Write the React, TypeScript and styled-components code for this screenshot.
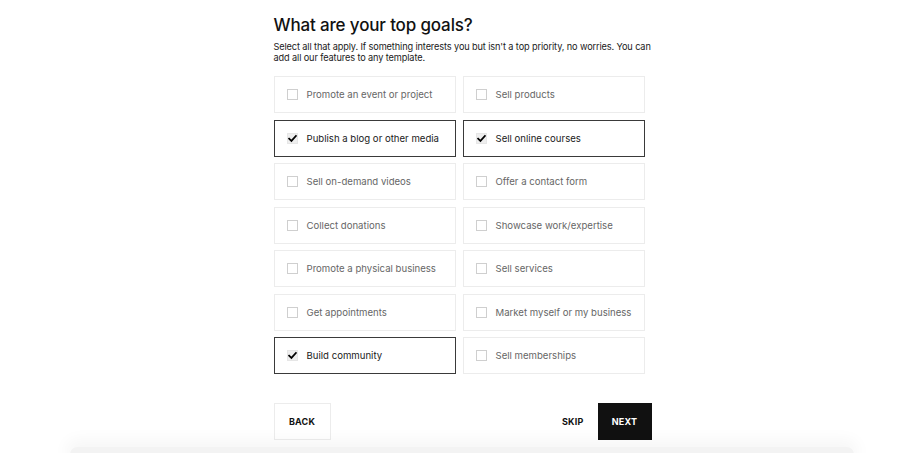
import React, { useState } from "react";
import styled, { createGlobalStyle } from "styled-components";

const Global = createGlobalStyle`
  html, body { margin: 0; padding: 0; background: #fff; }
  body { font-family: Inter, "Open Sans", Arial, sans-serif; color: #111; -webkit-font-smoothing: antialiased; }
`;

const Page = styled.div`
  width: 378px;
  margin: 0 auto;
  padding-top: 14px;
  padding-left: 1px;
`;

const Title = styled.h1`
  margin: 0;
  font-size: 17px;
  font-weight: 500;
  line-height: 22px;
  letter-spacing: -0.15px;
  color: #111;
`;

const Subtitle = styled.p`
  margin: 6px -8px 0 0;
  font-size: 9.2px;
  line-height: 10.5px;
  letter-spacing: -0.12px;
  color: #1a1a1a;
`;

const Grid = styled.div`
  margin-top: 13px;
  width: 371px;
  display: grid;
  grid-template-columns: 182px 182px;
  column-gap: 7px;
  row-gap: 6.5px;
`;

const Card = styled.label<{ $on: boolean }>`
  box-sizing: border-box;
  height: 37px;
  display: flex;
  align-items: center;
  gap: 9px;
  padding-left: 12px;
  border: 1px solid ${(p) => (p.$on ? "#3a3a3a" : "#ececec")};
  background: #fff;
  cursor: pointer;
  font-size: 9.6px;
  color: ${(p) => (p.$on ? "#1a1a1a" : "#666")};
`;

const Box = styled.span<{ $on: boolean }>`
  box-sizing: border-box;
  width: 11px;
  height: 11px;
  flex: none;
  border: 1px solid ${(p) => (p.$on ? "#e6e6e6" : "#cfcfcf")};
  background: ${(p) => (p.$on ? "#eeeeee" : "#fff")};
  display: flex;
  align-items: center;
  justify-content: center;
`;

const Footer = styled.div`
  margin-top: 28.5px;
  display: flex;
  align-items: center;
`;

const BackButton = styled.button`
  box-sizing: border-box;
  width: 57px;
  height: 37px;
  border: 1px solid #ececec;
  background: #fff;
  font-family: inherit;
  font-size: 9px;
  font-weight: 700;
  letter-spacing: 0.2px;
  color: #111;
  cursor: pointer;
`;

const Spacer = styled.div`
  flex: 1;
`;

const SkipButton = styled.button`
  border: 0;
  background: none;
  font-family: inherit;
  font-size: 9px;
  font-weight: 700;
  letter-spacing: 0.2px;
  color: #111;
  padding: 0;
  margin-right: 14px;
  cursor: pointer;
`;

const NextButton = styled.button`
  box-sizing: border-box;
  width: 54px;
  height: 37px;
  border: 0;
  background: #111;
  color: #fff;
  font-family: inherit;
  font-size: 9px;
  font-weight: 700;
  letter-spacing: 0.2px;
  cursor: pointer;
`;

const BottomShade = styled.div`
  position: fixed;
  left: 70px;
  right: 70px;
  bottom: -8px;
  height: 14px;
  background: #f3f3f3;
  border-radius: 10px;
  box-shadow: 0 -3px 16px 4px rgba(0, 0, 0, 0.04);
`;

const items: [string, string][] = [
  ["Promote an event or project", "Sell products"],
  ["Publish a blog or other media", "Sell online courses"],
  ["Sell on-demand videos", "Offer a contact form"],
  ["Collect donations", "Showcase work/expertise"],
  ["Promote a physical business", "Sell services"],
  ["Get appointments", "Market myself or my business"],
  ["Build community", "Sell memberships"],
];

const Check = () => (
  <svg width="10" height="9" viewBox="0 0 10 9">
    <path d="M1.2 4.6 L3.8 7.2 L8.8 1.6" fill="none" stroke="#000" strokeWidth="1.9" strokeLinecap="square" />
  </svg>
);

export default function App() {
  const [sel, setSel] = useState<Record<string, boolean>>({
    "Publish a blog or other media": true,
    "Sell online courses": true,
    "Build community": true,
  });
  const flat = items.flat();
  return (
    <>
      <Global />
      <Page>
        <Title>What are your top goals?</Title>
        <Subtitle>
          Select all that apply. If something interests you but isn't a top priority, no worries. You can
          add all our features to any template.
        </Subtitle>
        <Grid>
          {flat.map((t) => {
            const on = !!sel[t];
            return (
              <Card key={t} $on={on} onClick={() => setSel({ ...sel, [t]: !on })}>
                <Box $on={on}>{on && <Check />}</Box>
                {t}
              </Card>
            );
          })}
        </Grid>
        <Footer>
          <BackButton>BACK</BackButton>
          <Spacer />
          <SkipButton>SKIP</SkipButton>
          <NextButton>NEXT</NextButton>
        </Footer>
      </Page>
      <BottomShade />
    </>
  );
}
